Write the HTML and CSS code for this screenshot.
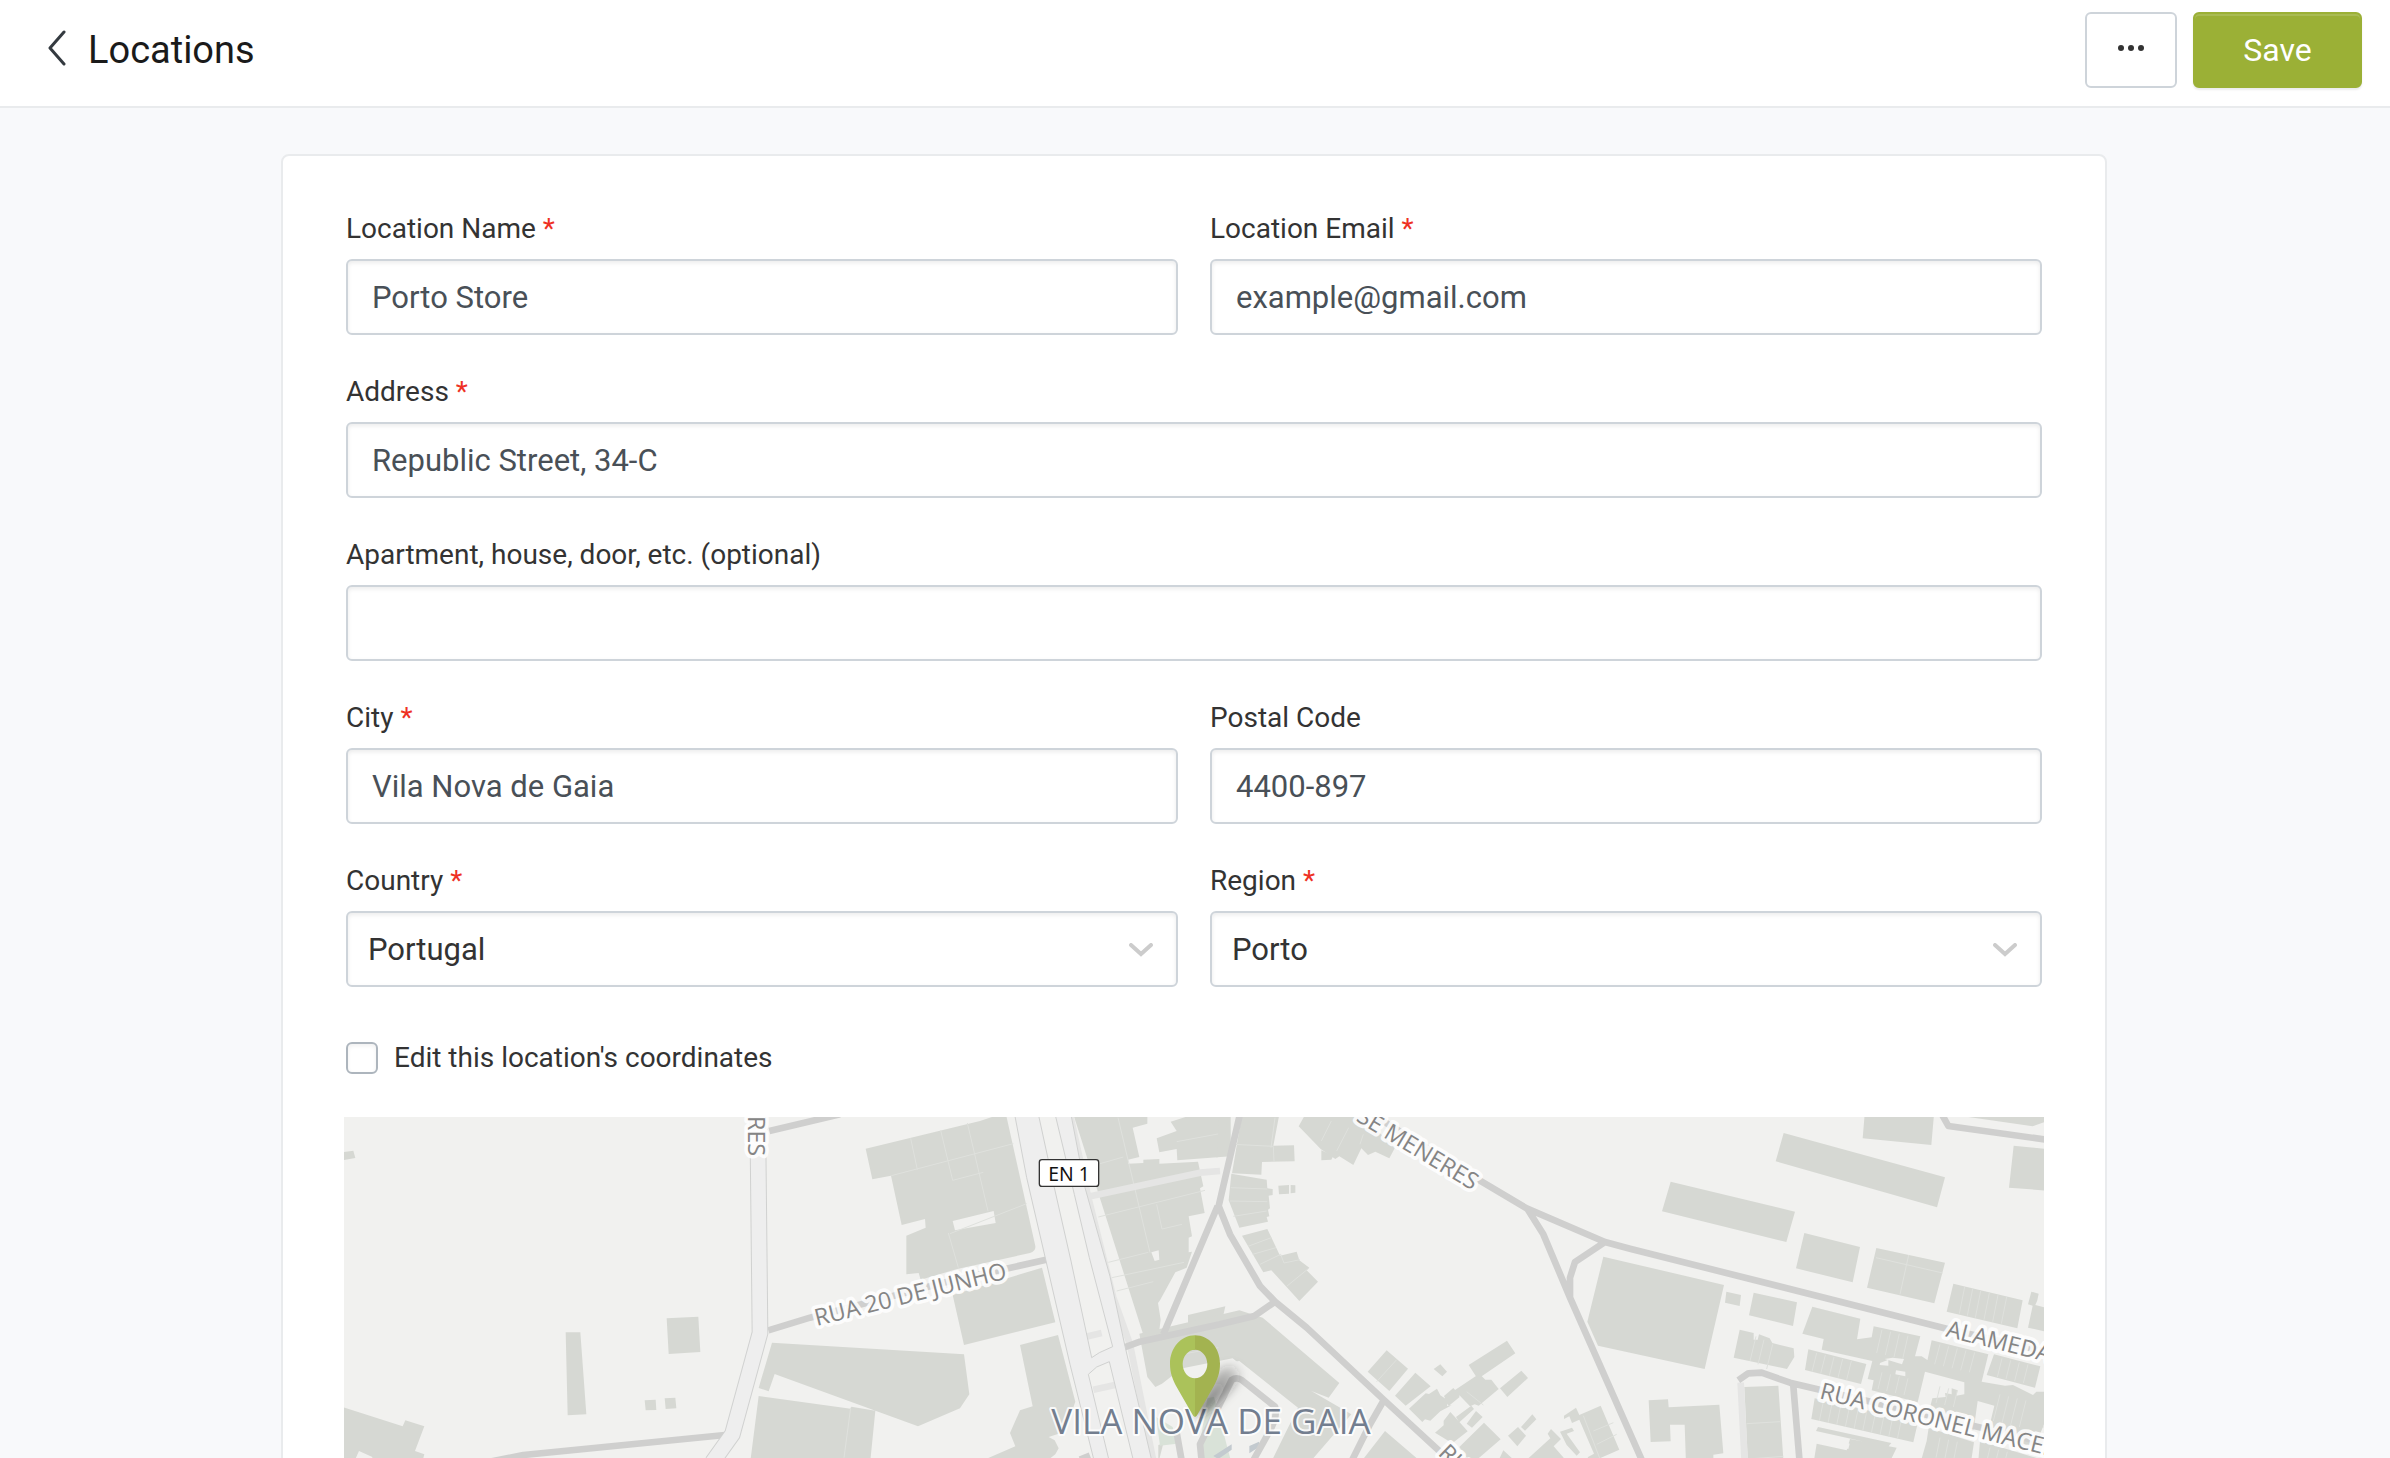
FILE: index.html
```html
<!DOCTYPE html>
<html lang="en">
<head>
<meta charset="utf-8">
<meta name="viewport" content="width=device-width, initial-scale=1">
<title>Locations</title>
<link rel="stylesheet" href="styles.css">
</head>
<body>
<div class="app">
  <header class="topbar">
    <a class="back" href="#" aria-label="Back">
      <svg width="18" height="36" viewBox="0 0 18 36" aria-hidden="true"><path d="M16 2 2 18l14 16" fill="none" stroke="#343a40" stroke-width="3" stroke-linecap="round" stroke-linejoin="round"/></svg>
    </a>
    <h1 class="title">Locations</h1>
    <button class="btn btn-more" type="button" aria-label="More actions">
      <svg width="26" height="6" viewBox="0 0 26 6" aria-hidden="true"><g fill="#333"><circle cx="3" cy="3" r="3"/><circle cx="13" cy="3" r="3"/><circle cx="23" cy="3" r="3"/></g></svg>
    </button>
    <button class="btn btn-save" type="submit" form="location">Save</button>
  </header>

  <main class="content">
    <form class="card" id="location">
      <div class="fields">
        <div class="field">
          <label for="name">Location Name <span class="req">*</span></label>
          <input class="control" id="name" type="text" value="Porto Store">
        </div>
        <div class="field">
          <label for="email">Location Email <span class="req">*</span></label>
          <input class="control" id="email" type="email" value="example@gmail.com">
        </div>
        <div class="field field-wide">
          <label for="address">Address <span class="req">*</span></label>
          <input class="control" id="address" type="text" value="Republic Street, 34-C">
        </div>
        <div class="field field-wide">
          <label for="apartment">Apartment, house, door, etc. (optional)</label>
          <input class="control" id="apartment" type="text">
        </div>
        <div class="field">
          <label for="city">City <span class="req">*</span></label>
          <input class="control" id="city" type="text" value="Vila Nova de Gaia">
        </div>
        <div class="field">
          <label for="postal">Postal Code</label>
          <input class="control" id="postal" type="text" value="4400-897">
        </div>
        <div class="field">
          <label for="country">Country <span class="req">*</span></label>
          <div class="select">
            <select class="control" id="country"><option>Portugal</option></select>
            <svg class="caret" width="24" height="14" viewBox="0 0 24 14" aria-hidden="true"><path d="m2 2 10 9L22 2" fill="none" stroke="#ccc" stroke-width="4" stroke-linecap="round"/></svg>
          </div>
        </div>
        <div class="field">
          <label for="region">Region <span class="req">*</span></label>
          <div class="select">
            <select class="control" id="region"><option>Porto</option></select>
            <svg class="caret" width="24" height="14" viewBox="0 0 24 14" aria-hidden="true"><path d="m2 2 10 9L22 2" fill="none" stroke="#ccc" stroke-width="4" stroke-linecap="round"/></svg>
          </div>
        </div>
      </div>

      <div class="check">
        <input id="coords" type="checkbox">
        <label for="coords">Edit this location's coordinates</label>
      </div>

      <svg class="map" viewBox="12 18 5100 1260" preserveAspectRatio="xMidYMin slice" role="img" aria-label="Map of Vila Nova de Gaia">
        <defs>
          <filter id="soft" x="-50%" y="-50%" width="200%" height="200%"><feGaussianBlur stdDeviation="14"/></filter>
          <linearGradient id="shade" x1="0" y1="1" x2="1" y2="0"><stop offset="0" stop-color="#222" stop-opacity=".7"/><stop offset=".8" stop-color="#222" stop-opacity=".25"/><stop offset="1" stop-color="#222" stop-opacity="0"/></linearGradient>
        </defs>
        <rect class="land" width="5200" height="1400"/>

        <!-- west -->
        <g class="bld">
          <path d="M0 125l40-6 6 22-46 8zM677 664h44l18 246-56 3zM980 622l95-5 6 106-95 6zM914 868l33-2 2 31-32 1zM974 862l32-2 3 32-32 2zM0 886l188 60 8-18 57 18-28 74 28 10-8 30H95l2-22-40-18-18 40H0z"/>
        </g>

        <!-- centre west -->
        <g transform="translate(1320)">
          <g class="bld">
            <path d="M257 113L600 30l60-20h18l88 395q2 14-16 21L532 474l-110 32-6-20-37 4V374l58-24-2-26-70 18-32-148-56 11z"/>
            <path d="M518 552l268-82 40 164-274 68zM720 702l114-30 52 200-32 90-48 16 18 10 12 24-10 18-60 46H600l-10-20 116-50-16-40 30-68 38-12z"/>
            <path d="M-24 695L552 730l16 120-28 42-126 54L0 795l-16-6-18 52-30-10zM-64 855l276 38 2-6 72 12-16 160H-90z"/>
            <path d="M880 10h222v28l-44 12 20 88-34 8v12l46-2v-10l48-2v14l116-6 16 74-10 6 14 74-48 10 10 60-10 4v44l10-2-16 48-34 14-46 84-6 8 8 50-6 46-44 6z"/>
            <path d="M1130 82l60-22-18-28 70-22h110v126l-160 12-2-34-52 10zM1224 612l112-26-12 54-100 20z"/>
            <path d="M1078 668l300-70 70 22 230 196-32 44-52-20 120 70-130 150h-120l90-170-176-140-180 28-52 40-20 10-24-30z"/>
            <path d="M1135 1002l30-10 16 60h-46z"/>
          </g>
          <path class="gap" d="M518 330l123-30 6 36-122 22zM1114 424l22-6 2 28-14 4zM1208 772l150-30 150 120 30 60-60 122h-340z"/>
          <path class="lot" d="M392 82l20 94M482 58l36 150 92-24M562 36l62 264M334 194l366-96M510 368l230-90M505 366l30 104M1014 20l96 405M960 158l70-20M955 318l320-80M1130 280l16 74 60-14M985 454l120-30M996 500l216-46M1010 540l110-28M212 890l-20 150M1190 92l140-26M1205 730l110-20"/>
          <path class="park" d="M1128 918l50 30 12 50-50 6zM1282 862l20-5 50 190h-92v-50z"/>
          <path class="bay" d="M1300 1035l55-35v16l-40 28zM1408 1005l29-13v16l-29 19z"/>
        </g>

        <!-- centre east -->
        <g transform="translate(2640)">
          <g class="bld">
            <path d="M-2 10h26L6 130l-16 10zM66 10h112l-18 94 62-1 2 48-98 2-2 38-88-4zM34 188l106 18 2 26 16 2v18l-12 2 4 38-6 4 4 20-8 2 4 14-86 18-32-82zM175 224l32-2v26l-30 2zM212 222l14 1v22l-14 2zM304 118l36 16-6 12-30 2z"/>
            <path d="M66 374l76-20 38 80 50-12 8 26 30 22-8 8 34 34-56 58-84-92-24 6zM236 46l20-36h160l110 98-18 34-42-20-22 10-20-20-24 50-42-26-12 8-44-30z"/>
            <path d="M500 718l64 55-56 67-65-58zM586 785l46 41-75 58-32-30zM567 893l50-46 10 2 24-16 10 20 24 16-4 16 14-2-34 18-30 28-16-4-8 8zM641 774l20-14 20 22-14 14zM746 762l115-73 25 38-113 77zM672 855l28-24 18 20 0 8-32 26zM704 838l74-50 18 18 18 0 22 28-60 50-12-4-14 6zM840 832l64-53 20 22-62 57zM645 965l26-22 0-14 20-26 20 22 32 36-46 36zM708 918l46-34 8 10-44 40zM740 938l28-38 20 18-32 32zM718 1008l74-73 50 50-70 60h-28zM864 974l30-26 24 26-26 32zM903 948l34-38 12 15-34 34zM905 1060l86-78-8-14 10-14 30 30-22 22 30 34-12 20zM1032 914l36-24 10 22 64-28 56 132-100 44 6-22 18-10-44-102-22 10-8-20-16 8zM1020 962l36-12 6 10-22 8 40 56-10 10-30-32zM425 1050l70-90 112 96zM830 1060l20-42 44 40z"/>
          </g>
          <path class="lot" d="M40 100l120 6 2 46M32 230l110 4M30 270l112 2M40 316l100-16M84 406l70-26M98 430l70-20M120 460l62-30 10 26 48-10M200 526l66-54M470 812l60-66M165 20l-12 90M304 90l30-60M350 120l36-70M420 100l10-30M1090 914l50 130M1120 960l60-25M1130 1000l60-30M740 842l50 40"/>
        </g>

        <!-- east -->
        <g transform="translate(3870)">
          <g class="bld">
            <path d="M461 66l484 133-24 90-484-138zM122 212l373 90-26 91-373-92zM704 10h208l-8 92-206-20zM1151 104l140 14v124l-154-12zM960 10h282v24l-34 12zM523 366l167 42-22 106-170-42zM739 411l206 44-32 122-202-47zM-80 437L282 522l-58 252-320-70-32-72zM970 518l208 50-16 84-212-50zM1204 542l22 6-4 20-6 14 60 16v70l-82-18 14-66-14-4z"/>
            <path d="M289 542l44 10-4 33-44-10zM371 545l130 29-12 71-132-32zM547 587l144 36-10 62 44-6 6-33 140 30-16 60 20 0 18 12-14 60-16 66-138-36 6-30-18-4 14-54-152-34 6-32-64-16zM329 656l42 10 0 20 12 0 4-16 32 12 8 14 64 16 2 26-22 36-160-34zM535 715l174 44-16 60-168-42zM1092 730l139 36-16 64-145-38zM905 688l170 42-20 82 70 12 24-2 60 30 10-10h30v80l-36 90-142-36 22-92-50-14-12 86-138-38 14-56 40-4-2-12 20 4 0-18 18 6-4 16 24-4 0-36-118-32zM1240 890v60l-14-6z"/>
            <path d="M554 862l310 70-14 62-306-70zM896 950l136 44-10 66H870l20-70zM564 948l220 48-10 12-216-48zM560 998l90 20 10-34 140 26-24 50H550zM1050 990l200 60v10h-206z"/>
            <path d="M343 828l102-4 16 236H354zM56 868l58-3 2 24 152-8 12 146-30 4v30h-82l-4-120-44 0 2 50-60 2z"/>
          </g>
          <path class="gap" d="M764 744l52 16 6-16-34-4zM750 756l25-10v18l-26-2zM796 790l30 6v-14l-28-4zM618 984l18 0v14h-22zM645 994l14 4-4 16-14-4z"/>
          <path class="lot" d="M738 440l200 46M836 432l-26 118M1004 528l-16 80M1028 534l-16 80M1052 540l-16 80M1078 546l-16 80M1104 552l-16 80M1130 558l-16 80M756 656l-16 70M782 662l-16 70M808 668l-16 70M834 674l-16 70M378 676l-18 74M402 686l-18 74M428 700l-18 74M560 726l-14 56M586 732l-14 56M612 738l-14 56M638 744l-14 56M664 750l-14 56M930 700l-16 60M956 706l-16 60M982 712l-16 60M1008 718l-16 60M1034 724l-16 60M1116 742l-14 56M1142 748l-14 56M1168 754l-14 56M1194 760l-14 56M756 784l-12 50M782 790l-12 50M808 796l-12 50M834 802l-12 50M930 826l-12 50M956 832l-12 50M982 838l-12 50M1110 850l-20 80M1136 856l-20 80M1162 862l-20 80M1188 868l-20 80M580 872l-12 58M606 878l-12 58M632 884l-12 58M658 890l-12 58M684 896l-12 58M710 902l-12 58M736 908l-12 58M762 914l-12 58M788 920l-12 58M814 926l-12 58M350 938l100-6M356 1044l104-8M930 980l-12 60M956 986l-12 60M982 992l-12 60M1080 1010l-12 50M1106 1016l-12 50M1132 1022l-12 50"/>
        </g>

        <g class="lane">
          <path d="M2190 10l55 250 75 300 50 140 70 350M2230 260l350-75 60-5M2225 680l60-14M2260 836l65-14"/>
          <path d="M4202 815l13 260"/>
        </g>
        <g class="road">
          <path d="M440 1054l110-22 605-60M1288 60l212-50M1285 658l125-38 400-105 315-70"/>
          <path d="M2702 0l-66 285 34 85 90 155 45 47 95 78 230 215 260 240M2633 285l-163 385M2345 712l55-20 240-52 103-25 62-43M3130 870l-40 70-60 120"/>
          <path d="M3080 0l345 212 135 80 235 101 75 20 950 240 300 70M3560 290l50 80 80 190 230 520M3795 393l-90 60-15 47v60"/>
          <path d="M4800 0l25 45 300 42M4195 808l30-21 40-2 85 30 850 200M4360 825l19 230"/>
          <path d="M2510 965l18 100M2585 1050l-5-50 95-193q14-10 30 0l100 80q10 30-20 80l-50 90M2220 1046l30-12"/>
        </g>

        <g class="avenue">
          <path class="edge" d="M1253 0l7 666-83 304-60 84"/>
          <path class="bed" d="M1253 0l7 666-83 304-60 84"/>
        </g>
        <path class="bed-fill" d="M2022 0l38 200 65 280 65 280 75 300h45l-65-270 25-22 38-16 75 308h55l-83-354-45-210-75-266-44-230h-48l60 250 45 190 70 267-40 18-23 15-62-290-50-220-50-230z"/>

        <g class="street">
          <text transform="translate(1223 15) rotate(90)">RES</text>
          <text transform="translate(1430 645) rotate(-14)">RUA 20 DE JUNHO</text>
          <text transform="translate(3046 28) rotate(31)">SE MENERES</text>
          <text transform="translate(3292 1030) rotate(44)">RUA</text>
          <text transform="translate(4815 676) rotate(14)">ALAMEDA</text>
          <text transform="translate(4436 862) rotate(14)">RUA CORONEL MACEDO</text>
        </g>

        <g class="shield">
          <rect x="2098" y="146" width="178" height="80" rx="8"/>
          <text x="2187" y="209">EN 1</text>
        </g>
        <text class="place" x="2134" y="970">VILA NOVA DE GAIA</text>

        <path d="M2565 915l60-120q30-45 70-30 20 30-20 70l-70 66z" fill="url(#shade)" filter="url(#soft)"/>
        <path d="M2565 673c-42 0-75 38-75 85 0 28 8 47 20 70l47 82q4 8 8 8zm0 43v86c-20 0-37-19-37-43s17-43 37-43z" fill="#abc25a"/>
        <path d="M2565 673c42 0 75 38 75 85 0 28-8 47-20 70l-47 82q-4 8-8 8zm0 43v86c20 0 37-19 37-43s-17-43-37-43z" fill="#a3b350"/>
      </svg>
    </form>
  </main>
</div>
</body>
</html>
```
FILE: styles.css
```css
* { box-sizing: border-box; }

body {
  margin: 0;
  background: #f8f9fb;
  color: #333;
  font-family: Roboto, "Liberation Sans", sans-serif;
  font-size: 28px;
}

.app {
  display: flex;
  flex-direction: column;
  height: 100vh;
}

.topbar {
  display: flex;
  flex: none;
  align-items: flex-start;
  gap: 16px;
  padding: 12px 28px 18px 48px;
  background: #fff;
  border-bottom: 2px solid #e9ebed;
}

.back {
  display: flex;
  align-items: center;
  height: 72px;
  padding-right: 6px;
}

.title {
  flex: 1;
  margin: 0;
  color: #1a1a1a;
  font-size: 38px;
  font-weight: 400;
  line-height: 76px;
}

.btn {
  display: flex;
  align-items: center;
  justify-content: center;
  height: 76px;
  padding: 0;
  border: 2px solid #ced4da;
  border-radius: 6px;
  background: #fff;
  font: inherit;
  cursor: pointer;
}

.btn-more {
  width: 92px;
  padding-bottom: 4px;
}

.btn-save {
  width: 169px;
  border-color: #9bb036;
  background: #9bb036;
  box-shadow: inset 0 2px 0 rgba(255, 255, 255, .15), 0 2px 2px rgba(0, 0, 0, .08);
  color: #fff;
  font-size: 32px;
}

.content {
  flex: 1;
  min-height: 0;
  padding: 46px 24px 0 22px;
  overflow-y: auto;
  scrollbar-width: none;
}

.card {
  max-width: 1826px;
  margin: 0 auto;
  padding: 54px 63px;
  background: #fff;
  border: 2px solid #e9ebed;
  border-radius: 8px;
}

.fields {
  display: grid;
  grid-template-columns: 1fr 1fr;
  gap: 38px 32px;
}

.field {
  display: flex;
  flex-direction: column;
  gap: 11px;
  min-width: 0;
}

.field-wide { grid-column: 1 / -1; }

.field label { line-height: 38px; }

.req { color: #ee3124; }

.control {
  width: 100%;
  height: 76px;
  padding: 0 24px;
  border: 2px solid #ced4da;
  border-radius: 6px;
  background: #fff;
  box-shadow: inset 0 2px 4px rgba(0, 0, 0, .08);
  color: #495057;
  font: inherit;
  font-size: 31px;
}

.select {
  display: grid;
  align-items: center;
}

.select > * { grid-area: 1 / 1; }

select.control {
  padding: 0 20px;
  appearance: none;
  color: #333;
}

.caret {
  justify-self: end;
  margin: 2px 25px 0 0;
  pointer-events: none;
}

.check {
  display: flex;
  align-items: center;
  gap: 16px;
  margin: 55px 0 43px;
}

.check label { line-height: 32px; }

.check input {
  width: 32px;
  height: 32px;
  margin: 0;
  appearance: none;
  border: 2px solid #adb5bd;
  border-radius: 6px;
  background: #fff;
  box-shadow: inset 0 2px 4px rgba(0, 0, 0, .06);
}

.map {
  display: block;
  width: calc(100% + 4px);
  margin: 0 -2px;
  font-family: "Noto Sans", "Open Sans", sans-serif;
}

.land, .gap { fill: #f1f1ef; }
.bld { fill: #d6d8d3; }
.lot { fill: none; stroke: #dfe1dd; stroke-width: 3; }
.park { fill: #d9e2d8; }
.bay { fill: #c3cacf; }

.road, .lane {
  fill: none;
  stroke: #cfcfce;
  stroke-width: 20;
  stroke-linejoin: round;
}

.lane { stroke: #e5e5e4; }

.avenue { fill: none; }
.edge { stroke: #d0d1d0; stroke-width: 50; }
.bed { stroke: #eee; stroke-width: 44; }
.bed-fill { fill: #eee; stroke: #d0d1d0; stroke-width: 3; }

.street text, .place {
  paint-order: stroke;
  stroke: rgba(255, 255, 255, .85);
  stroke-linejoin: round;
}

.street text {
  fill: #858585;
  font-family: "Open Sans", "Noto Sans", sans-serif;
  font-size: 70px;
  stroke-width: 22;
}

.place {
  fill: #737e8f;
  font-family: "Open Sans", "Noto Sans", sans-serif;
  font-size: 105px;
  stroke-width: 12;
}

.shield rect { fill: #fff; stroke: #333; stroke-width: 4; }
.shield text { fill: #111; font-size: 58px; text-anchor: middle; }
```
